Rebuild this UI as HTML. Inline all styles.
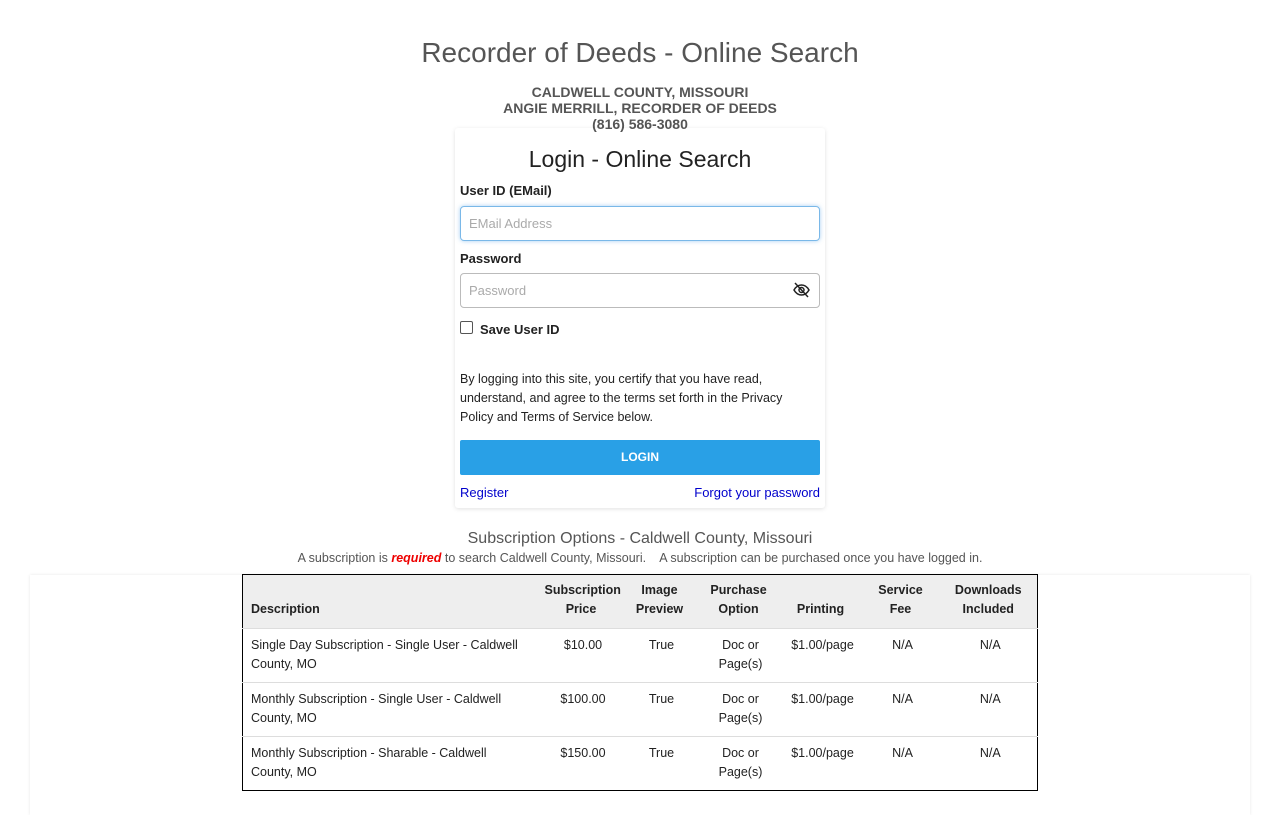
<!DOCTYPE html>
<html><head><style>
body{margin:0;background:#fff;font-family:"Liberation Sans",sans-serif;color:#222;width:1280px;height:800px;overflow:hidden;position:relative}
.a{position:absolute}
.c{text-align:center;left:0;width:1280px}
h1{font-weight:normal;font-size:28px;color:#555;margin:0}
.sub{font-weight:bold;font-size:14px;color:#555;line-height:16px}
.card{left:455px;top:128px;width:370px;height:380px;box-shadow:0 1px 4px rgba(0,0,0,.12);border-radius:3px}
.lbl{font-weight:bold;font-size:13px;left:460px}
.inp{left:460px;width:360px;height:33px;border:1px solid #bbb;border-radius:4px;font-size:13px;color:#aaa;box-sizing:border-box;padding:9px 8px}
.panel{left:30px;top:575px;width:1220px;height:240px;box-shadow:0 0 3px rgba(0,0,0,.1)}
table{position:absolute;left:242px;top:574px;width:796px;border:1px solid #000;border-collapse:collapse;font-size:12.5px;background:#fff;table-layout:fixed}
th{background:#eee;font-weight:bold;height:34px;vertical-align:bottom;padding:6px 4px 9px;line-height:19px}
td{vertical-align:top;padding:7px 4px 7px 8px;line-height:19px;height:39px;border-top:1px solid #ddd;text-align:center}
th:first-child{text-align:left;padding-left:8px}
td:first-child{text-align:left;padding-right:20px}
a{color:#00c}
</style></head><body>
<div class="a c" style="top:37px"><h1>Recorder of Deeds - Online Search</h1></div>
<div class="a c sub" style="top:84px">CALDWELL COUNTY, MISSOURI<br>ANGIE MERRILL, RECORDER OF DEEDS<br>(816) 586-3080</div>
<div class="a card"></div>
<div class="a" style="left:455px;width:370px;top:146px;text-align:center;font-size:23px;color:#222">Login - Online Search</div>
<div class="a lbl" style="top:183px">User ID (EMail)</div>
<div class="a inp" style="top:206px;height:35px;border-color:#7ab8e8;box-shadow:0 0 4px rgba(80,160,230,.5)">EMail Address</div>
<div class="a lbl" style="top:251px">Password</div>
<div class="a inp" style="top:273px;height:35px">Password</div>
<svg class="a" style="left:793px;top:282px" width="17" height="16" viewBox="0 0 17 16" fill="none" stroke="#222" stroke-width="1.5"><path d="M1 8c2-3.5 4.5-5 7.5-5s5.5 1.5 7.5 5c-2 3.5-4.5 5-7.5 5S3 11.5 1 8z"/><circle cx="8.5" cy="8" r="2.5"/><path d="M2 1l13 14"/></svg>
<div class="a" style="left:460px;top:321px;width:11px;height:11px;border:1px solid #555;border-radius:2px"></div>
<div class="a lbl" style="left:480px;top:322px">Save User ID</div>
<div class="a" style="left:460px;top:370px;width:350px;font-size:12.5px;line-height:19px">By logging into this site, you certify that you have read, understand, and agree to the terms set forth in the Privacy Policy and Terms of Service below.</div>
<div class="a" style="left:460px;top:440px;width:360px;height:35px;background:#29a0e6;border-radius:2px;color:#fff;font-weight:bold;font-size:12px;text-align:center;line-height:35px">LOGIN</div>
<a class="a" style="left:460px;top:485px;font-size:13px">Register</a>
<a class="a" style="left:820px;top:485px;font-size:13px;transform:translateX(-100%);white-space:nowrap">Forgot your password</a>
<div class="a c" style="top:530px;font-size:16px;color:#555">Subscription Options - Caldwell County, Missouri</div>
<div class="a c" style="top:551px;font-size:12.5px;color:#555">A subscription is <b style="color:#e00"><i>required</i></b> to search Caldwell County, Missouri. &nbsp;&nbsp; A subscription can be purchased once you have logged in.</div>
<div class="a panel"></div>
<table>
<colgroup><col style="width:298px"><col style="width:81px"><col style="width:76px"><col style="width:82px"><col style="width:82px"><col style="width:78px"><col style="width:98px"></colgroup>
<tr><th>Description</th><th>Subscription<br>Price</th><th>Image<br>Preview</th><th>Purchase<br>Option</th><th>Printing</th><th>Service<br>Fee</th><th>Downloads<br>Included</th></tr>
<tr><td>Single Day Subscription - Single User - Caldwell County, MO</td><td>$10.00</td><td>True</td><td>Doc or<br>Page(s)</td><td>$1.00/page</td><td>N/A</td><td>N/A</td></tr>
<tr><td>Monthly Subscription - Single User - Caldwell County, MO</td><td>$100.00</td><td>True</td><td>Doc or<br>Page(s)</td><td>$1.00/page</td><td>N/A</td><td>N/A</td></tr>
<tr><td>Monthly Subscription - Sharable - Caldwell County, MO</td><td>$150.00</td><td>True</td><td>Doc or<br>Page(s)</td><td>$1.00/page</td><td>N/A</td><td>N/A</td></tr>
</table>
</body></html>
